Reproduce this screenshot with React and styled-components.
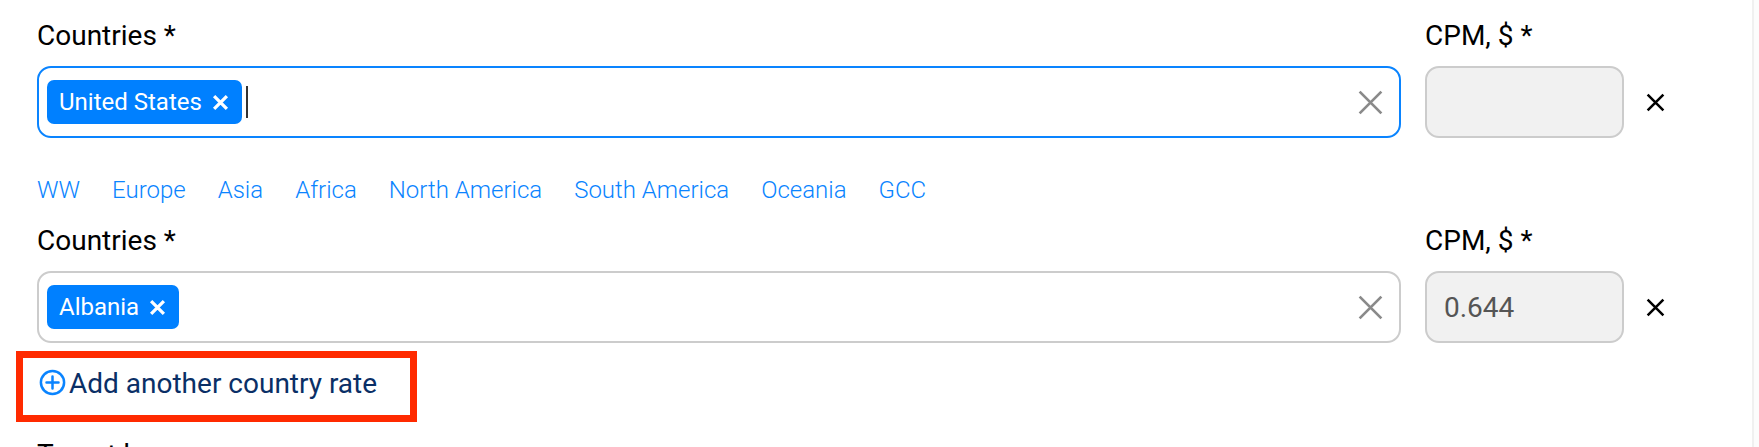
import React from 'react';
import styled, { createGlobalStyle } from 'styled-components';

const GlobalStyle = createGlobalStyle`
  html, body {
    margin: 0;
    height: 100%;
    overflow: hidden;
    background: #fff;
    font-family: Roboto, "Liberation Sans", sans-serif;
  }
`

const regions = ['WW', 'Europe', 'Asia', 'Africa', 'North America', 'South America', 'Oceania', 'GCC']

const CrossIcon = ({ size = 26, weight = 2, color = 'currentColor' }) => (
  <svg width={size} height={size} viewBox="0 0 24 24" fill="none" stroke={color} strokeWidth={weight}>
    <path d="M3 3 L21 21 M21 3 L3 21" />
  </svg>
)

const PlusCircle = () => (
  <svg width="27" height="27" viewBox="0 0 27 27" fill="none" stroke="#0a84ff" strokeWidth="2.5" strokeLinecap="round">
    <circle cx="13.5" cy="13.5" r="11.6" />
    <path d="M13.5 7.5 V19.5 M7.5 13.5 H19.5" />
  </svg>
)

const RateRow = ({ country, cpm, focused }) => (
  <Row>
    <CountryCol>
      <Label>Countries *</Label>
      <SelectBox $focused={focused}>
        <Tag>
          {country}
          <TagRemove><CrossIcon size={17} weight={4.6} color="#fff" /></TagRemove>
        </Tag>
        {focused && <Caret />}
        <ClearBtn><CrossIcon size={29} weight={2.2} color="#8a8a8a" /></ClearBtn>
      </SelectBox>
    </CountryCol>
    <CpmCol>
      <Label>CPM, $ *</Label>
      <CpmInput>{cpm}</CpmInput>
    </CpmCol>
    <RemoveBtn><CrossIcon size={21} weight={2.9} color="#000" /></RemoveBtn>
  </Row>
)

const App = () => {
  return (
    <Page>
      <GlobalStyle />
      <Content>
        <RateRow country="United States" focused />
        <Regions>
          {regions.map((value, i) => (
            <RegionLink key={i}>{value}</RegionLink>
          ))}
        </Regions>
        <RateRow country="Albania" cpm="0.644" />
        <AddRate>
          <PlusCircle />
          <AddText>Add another country rate</AddText>
        </AddRate>
        <TargetLabel>Target languages</TargetLabel>
      </Content>
      <Scrollbar />
    </Page>
  )
}

export default App

const Page = styled.div`
  display: flex;
  height: 447px;
  overflow: hidden;
`

const Content = styled.div`
  flex: 1;
  padding: 21px 0 0 37px;
`

const Scrollbar = styled.div`
  width: 7px;
  background: #fcfcfc;
  border-left: 2px solid #f0f0f0;
  box-sizing: border-box;
`

const Row = styled.div`
  display: flex;
  align-items: flex-end;
`

const CountryCol = styled.div`
  width: 1364px;
`

const CpmCol = styled.div`
  width: 199px;
  margin-left: 24px;
`

const Label = styled.div`
  font-size: 28px;
  line-height: 30px;
  color: #000;
  margin-bottom: 15px;
`

const TargetLabel = styled(Label)`
  margin-top: 18px;
`

const SelectBox = styled.div`
  display: flex;
  align-items: center;
  height: 72px;
  box-sizing: border-box;
  padding: 0 8px;
  background: #fff;
  border: 2px solid ${props => (props.$focused ? '#0a84ff' : '#cccccc')};
  border-radius: 14px;
`

const Tag = styled.div`
  display: flex;
  align-items: center;
  gap: 10px;
  height: 44px;
  padding: 0 13px 0 12px;
  background: #0080ff;
  border-radius: 7px;
  color: #fff;
  font-size: 24px;
`

const TagRemove = styled.span`
  display: flex;
`

const Caret = styled.span`
  width: 2px;
  height: 32px;
  margin-left: 4px;
  background: #333;
`

const ClearBtn = styled.span`
  display: flex;
  margin-left: auto;
  margin-right: 6px;
`

const CpmInput = styled.div`
  display: flex;
  align-items: center;
  height: 72px;
  box-sizing: border-box;
  padding: 0 17px;
  background: #f1f1f1;
  border: 2px solid #cccccc;
  border-radius: 14px;
  color: #555;
  font-size: 28px;
`

const RemoveBtn = styled.span`
  display: flex;
  align-items: center;
  height: 72px;
  margin-left: 21px;
`

const Regions = styled.div`
  display: flex;
  gap: 32px;
  margin-top: 37px;
  margin-bottom: 21px;
`

const RegionLink = styled.a`
  color: #0a84ff;
  font-size: 24px;
  font-weight: 300;
  line-height: 30px;
`

const AddRate = styled.div`
  display: flex;
  align-items: flex-start;
  gap: 3px;
  margin: 8px 0 0 -21px;
  box-sizing: border-box;
  height: 71px;
  width: 401px;
  padding: 11px 0 0 16px;
  border: 7px solid #ff2a00;
  color: #0a2f66;
  font-size: 28px;
`

const AddText = styled.span`
  line-height: 30px;
`
